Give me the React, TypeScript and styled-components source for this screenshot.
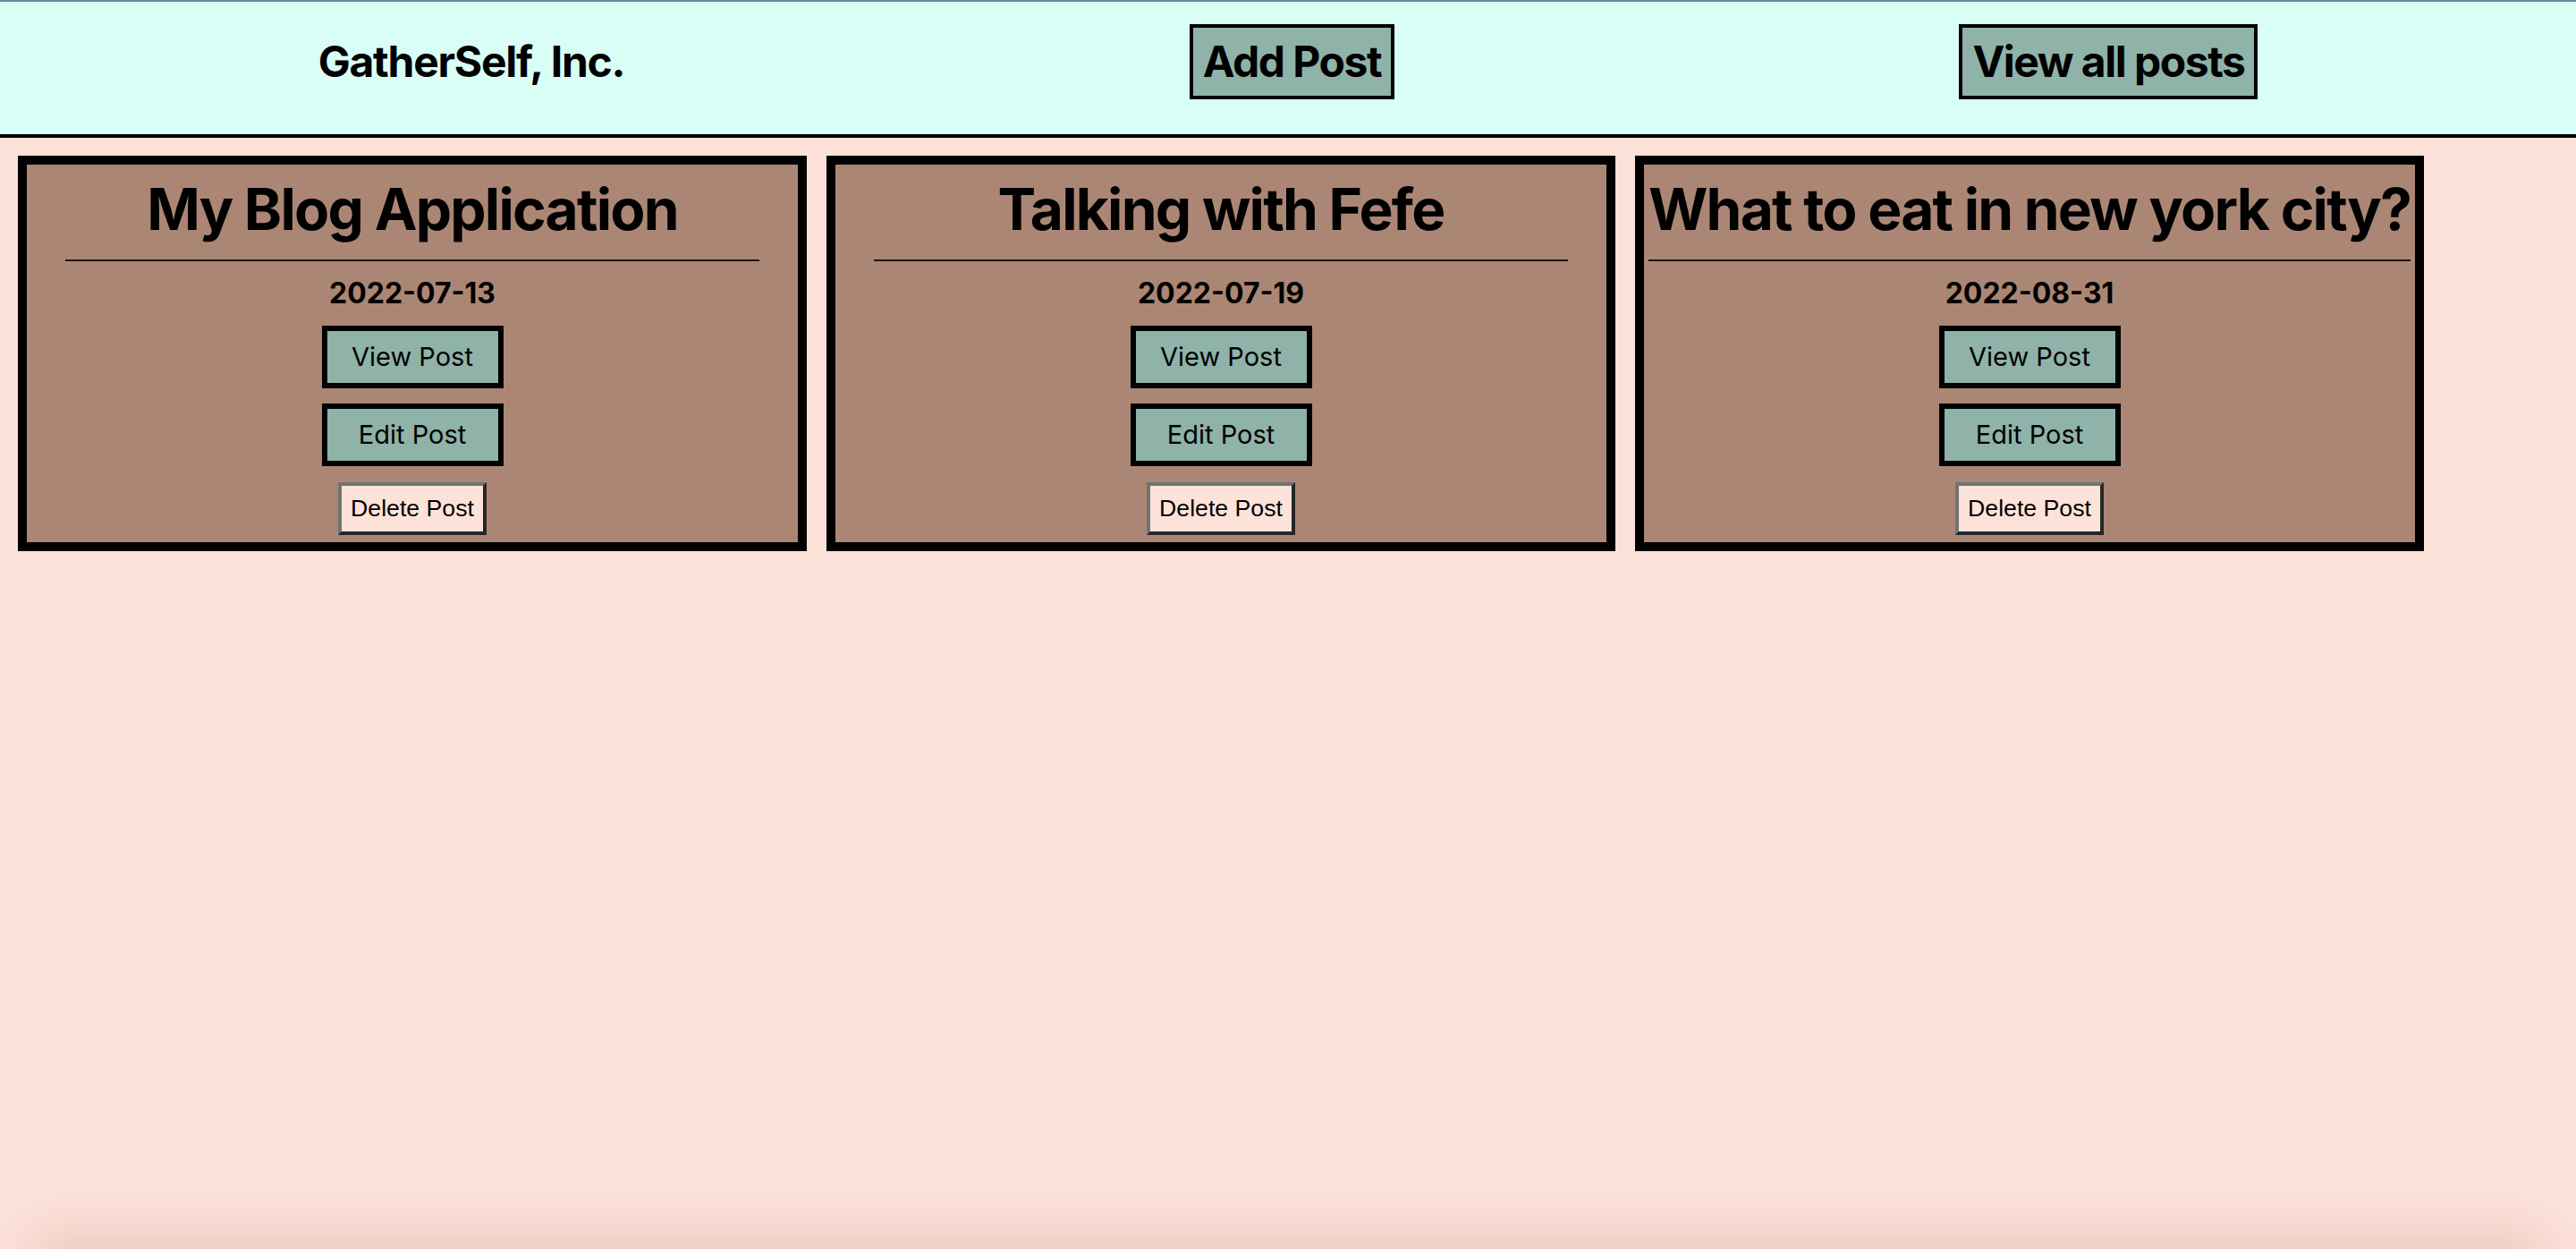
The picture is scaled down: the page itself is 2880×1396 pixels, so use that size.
import React from 'react';
import styled, { createGlobalStyle } from 'styled-components';

const GlobalStyle = createGlobalStyle`
  html, body {
    margin: 0;
    padding: 0;
    background: #fce1d8;
    font-family: Inter, "Noto Sans", sans-serif;
    color: #000;
  }
`;

const Page = styled.div`
  min-height: 1396px;
  background: #fce1d8;
`;

const NavBar = styled.header`
  height: 134px;
  padding: 0 40px 14px;
  display: flex;
  justify-content: space-around;
  align-items: center;
  background: #d9fef6;
  border-top: 2px solid #5b9099;
  border-bottom: 4px solid #000;
`;

const Brand = styled.h2`
  margin: 0;
  font-size: 48px;
  line-height: 58px;
  font-weight: 700;
  letter-spacing: -1.25px;
`;

const NavButton = styled.button`
  font-family: Inter, "Noto Sans", sans-serif;
  font-size: 48px;
  line-height: 58px;
  font-weight: 700;
  letter-spacing: -1.5px;
  color: #000;
  background: #8fb3a8;
  border: 4px solid #000;
  padding: 9px 11px;
  cursor: pointer;
`;

const PostList = styled.main`
  display: flex;
  flex-wrap: wrap;
  align-items: flex-start;
  gap: 22px;
  padding: 20px;
`;

const Card = styled.article`
  width: 882px;
  box-sizing: border-box;
  display: flex;
  flex-direction: column;
  align-items: center;
  padding: 0 0 8px;
  background: #ac8675;
  border: 10px solid #000;
`;

const TitleBlock = styled.div`
  width: fit-content;
  min-width: 90%;
  margin: 11px auto 0;
`;

const Title = styled.h1`
  margin: 0;
  font-size: 64px;
  line-height: 77px;
  font-weight: 700;
  letter-spacing: -1.75px;
  text-align: center;
  white-space: nowrap;
`;

const Rule = styled.hr`
  margin: 18px 0 0;
  height: 0;
  border: none;
  border-top: 2px solid #1b1411;
`;

const PostDate = styled.h4`
  margin: 17px 0 0;
  font-size: 32px;
  line-height: 37px;
  font-weight: 700;
`;

const ActionButton = styled.button<{ $first?: boolean }>`
  margin-top: ${(p) => (p.$first ? '18px' : '17px')};
  width: 203px;
  box-sizing: border-box;
  font-family: Inter, "Noto Sans", sans-serif;
  font-size: 29px;
  line-height: 35px;
  font-weight: 400;
  color: #000;
  background: #8fb3a8;
  border: 6px solid #000;
  padding: 11px 0 12px;
  cursor: pointer;
`;

const DeleteButton = styled.button`
  margin-top: 18px;
  font-family: "Liberation Sans", Arial, sans-serif;
  font-size: 26.67px;
  line-height: 31px;
  color: #000;
  background: #fde2d9;
  border: 4px solid;
  border-color: #727272 #262626 #262626 #727272;
  padding: 10px 10px;
  cursor: pointer;
`;

const BottomShade = styled.div`
  position: fixed;
  left: 50px;
  right: 50px;
  bottom: -24px;
  height: 24px;
  border-radius: 40px;
  box-shadow: 0 0 50px 14px rgba(120, 70, 55, 0.16);
  pointer-events: none;
`;

type Post = { id: number; title: string; date: string };

const posts: Post[] = [
  { id: 1, title: 'My Blog Application', date: '2022-07-13' },
  { id: 2, title: 'Talking with Fefe', date: '2022-07-19' },
  { id: 3, title: 'What to eat in new york city?', date: '2022-08-31' },
];

const PostCard = ({ post }: { post: Post }) => (
  <Card>
    <TitleBlock>
      <Title>{post.title}</Title>
      <Rule />
    </TitleBlock>
    <PostDate>{post.date}</PostDate>
    <ActionButton $first>View Post</ActionButton>
    <ActionButton>Edit Post</ActionButton>
    <DeleteButton>Delete Post</DeleteButton>
  </Card>
);

export default function App() {
  return (
    <Page>
      <GlobalStyle />
      <NavBar>
        <Brand>GatherSelf, Inc.</Brand>
        <NavButton>Add Post</NavButton>
        <NavButton>View all posts</NavButton>
      </NavBar>
      <PostList>
        {posts.map((post) => (
          <PostCard key={post.id} post={post} />
        ))}
      </PostList>
      <BottomShade />
    </Page>
  );
}
